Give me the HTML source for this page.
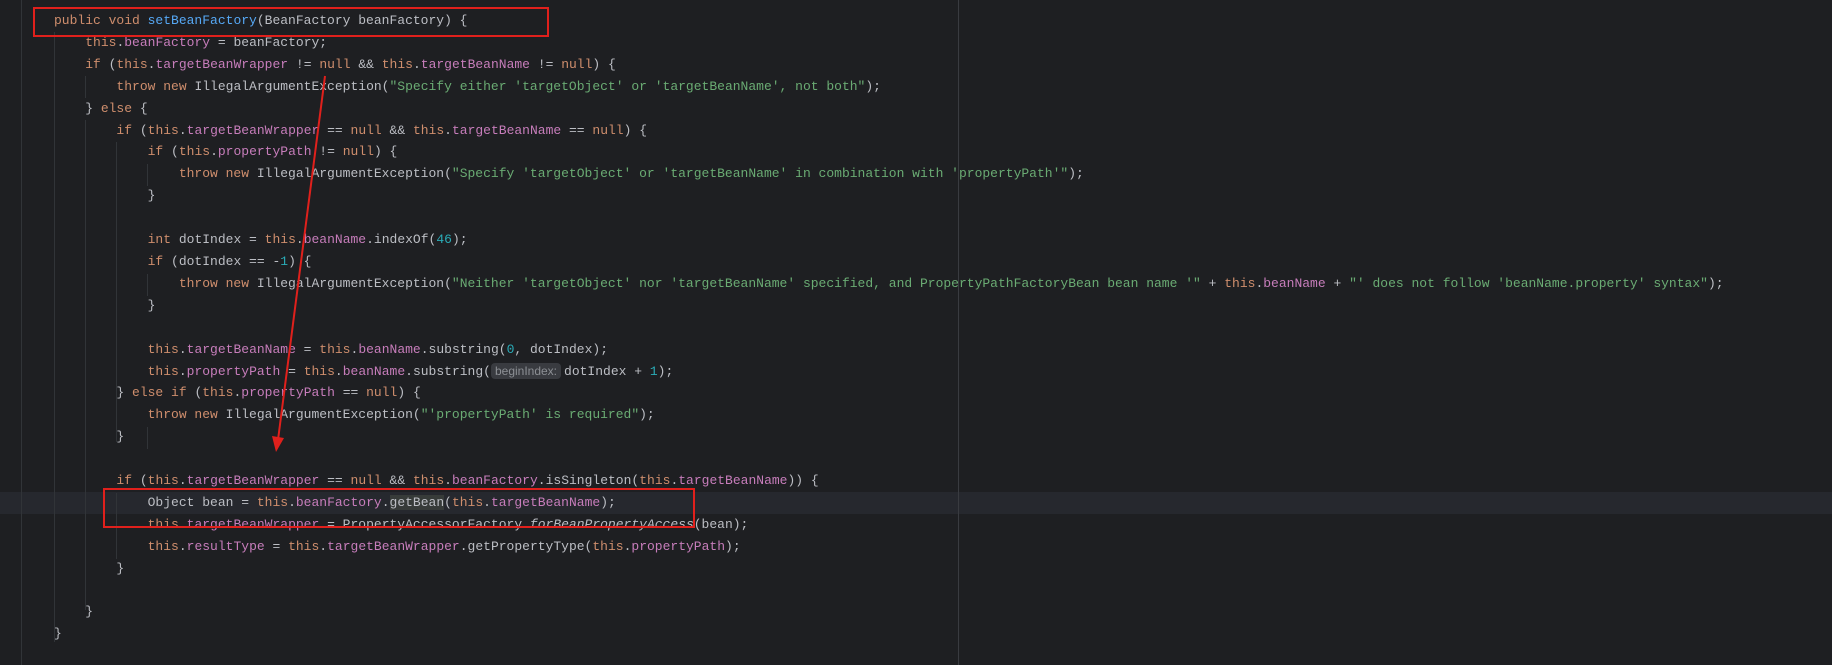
<!DOCTYPE html>
<html><head><meta charset="utf-8"><style>
html,body{margin:0;padding:0;background:#1e1f22;width:1832px;height:665px;overflow:hidden}
.code{position:absolute;left:54px;top:10px;font-family:"Liberation Mono",monospace;font-size:13px;line-height:21.9px;color:#bcbec4;white-space:pre}
.k{color:#cf8e6d}.f{color:#c77dbb}.s{color:#6aab73}.m{color:#56a8f5}.n{color:#2aacb8}.i{font-style:italic}
.hl{background:#373b39}
.hint{font-family:"Liberation Sans",sans-serif;font-size:12px;color:#8c8f94;background:#393b40;border-radius:4px;padding:1px 4px;margin-right:3px}
.g{position:absolute;width:1px;background:#313438}
</style></head><body>
<div style="position:absolute;left:0;top:492px;width:1832px;height:22px;background:#26282e"></div>
<div style="position:absolute;left:958px;top:0;width:1px;height:665px;background:#393b40"></div>
<div class="g" style="left:21px;top:0;height:665px"></div>
<div class="g" style="left:54px;top:32px;height:610px"></div>
<div class="g" style="left:85px;top:76px;height:22px"></div>
<div class="g" style="left:85px;top:120px;height:490px"></div>
<div class="g" style="left:116px;top:142px;height:300px"></div>
<div class="g" style="left:147px;top:164px;height:22px"></div>
<div class="g" style="left:147px;top:274px;height:22px"></div>
<div class="g" style="left:147px;top:427px;height:22px"></div>
<div class="g" style="left:116px;top:493px;height:66px"></div>
<div class="code"><span class="k">public void </span><span class="m">setBeanFactory</span>(BeanFactory beanFactory) {
    <span class="k">this</span>.<span class="f">beanFactory</span> = beanFactory;
    <span class="k">if </span>(<span class="k">this</span>.<span class="f">targetBeanWrapper</span> != <span class="k">null </span>&amp;&amp; <span class="k">this</span>.<span class="f">targetBeanName</span> != <span class="k">null</span>) {
        <span class="k">throw new </span>IllegalArgumentException(<span class="s">"Specify either 'targetObject' or 'targetBeanName', not both"</span>);
    } <span class="k">else </span>{
        <span class="k">if </span>(<span class="k">this</span>.<span class="f">targetBeanWrapper</span> == <span class="k">null </span>&amp;&amp; <span class="k">this</span>.<span class="f">targetBeanName</span> == <span class="k">null</span>) {
            <span class="k">if </span>(<span class="k">this</span>.<span class="f">propertyPath</span> != <span class="k">null</span>) {
                <span class="k">throw new </span>IllegalArgumentException(<span class="s">"Specify 'targetObject' or 'targetBeanName' in combination with 'propertyPath'"</span>);
            }

            <span class="k">int </span>dotIndex = <span class="k">this</span>.<span class="f">beanName</span>.indexOf(<span class="n">46</span>);
            <span class="k">if </span>(dotIndex == -<span class="n">1</span>) {
                <span class="k">throw new </span>IllegalArgumentException(<span class="s">"Neither 'targetObject' nor 'targetBeanName' specified, and PropertyPathFactoryBean bean name '"</span> + <span class="k">this</span>.<span class="f">beanName</span> + <span class="s">"' does not follow 'beanName.property' syntax"</span>);
            }

            <span class="k">this</span>.<span class="f">targetBeanName</span> = <span class="k">this</span>.<span class="f">beanName</span>.substring(<span class="n">0</span>, dotIndex);
            <span class="k">this</span>.<span class="f">propertyPath</span> = <span class="k">this</span>.<span class="f">beanName</span>.substring(<span class="hint">beginIndex:</span>dotIndex + <span class="n">1</span>);
        } <span class="k">else if </span>(<span class="k">this</span>.<span class="f">propertyPath</span> == <span class="k">null</span>) {
            <span class="k">throw new </span>IllegalArgumentException(<span class="s">"'propertyPath' is required"</span>);
        }

        <span class="k">if </span>(<span class="k">this</span>.<span class="f">targetBeanWrapper</span> == <span class="k">null </span>&amp;&amp; <span class="k">this</span>.<span class="f">beanFactory</span>.isSingleton(<span class="k">this</span>.<span class="f">targetBeanName</span>)) {
            Object bean = <span class="k">this</span>.<span class="f">beanFactory</span>.<span class="hl">getBean</span>(<span class="k">this</span>.<span class="f">targetBeanName</span>);
            <span class="k">this</span>.<span class="f">targetBeanWrapper</span> = PropertyAccessorFactory.<span class="i">forBeanPropertyAccess</span>(bean);
            <span class="k">this</span>.<span class="f">resultType</span> = <span class="k">this</span>.<span class="f">targetBeanWrapper</span>.getPropertyType(<span class="k">this</span>.<span class="f">propertyPath</span>);
        }

    }
}</div>
<div style="position:absolute;left:33px;top:7px;width:512px;height:26px;border:2px solid #e0201c"></div>
<div style="position:absolute;left:103px;top:488px;width:588px;height:36px;border:2px solid #e0201c"></div>
<svg style="position:absolute;left:0;top:0" width="1832" height="665"><line x1="325" y1="76" x2="278" y2="440" stroke="#e0201c" stroke-width="2"/><polygon points="272,436 284,438 276,452" fill="#e0201c"/></svg>
</body></html>
